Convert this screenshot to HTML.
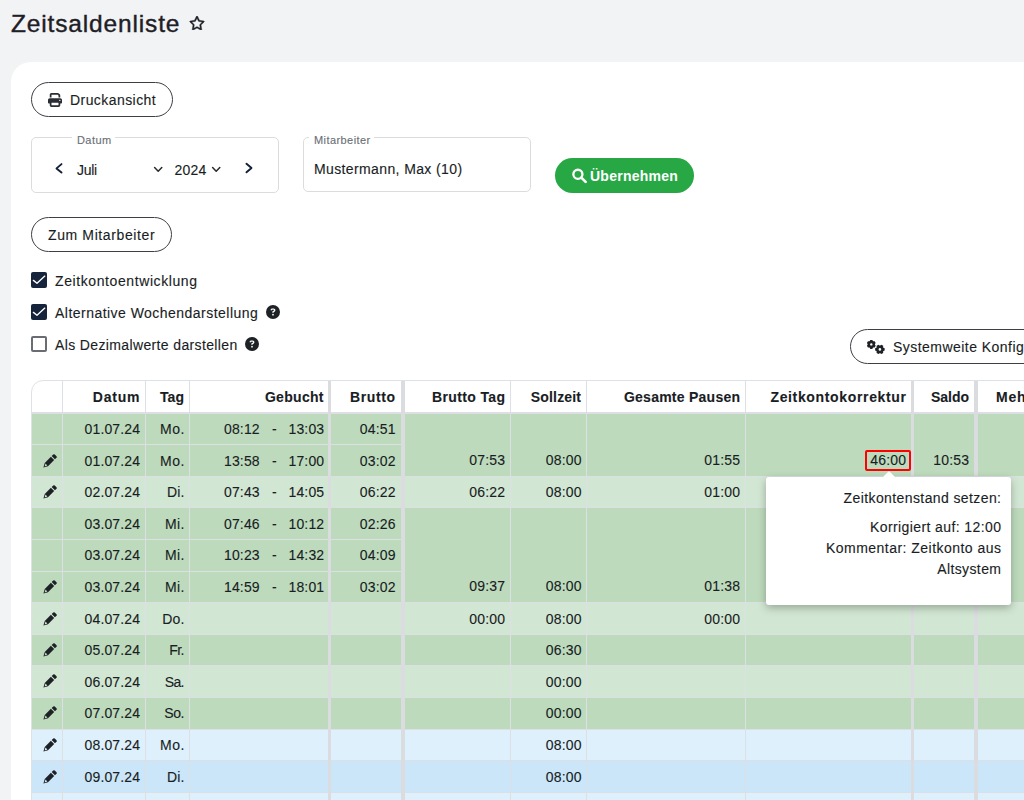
<!DOCTYPE html>
<html><head><meta charset="utf-8">
<style>
*{box-sizing:border-box;margin:0;padding:0}
html,body{width:1024px;height:800px;overflow:hidden}
body{background:#f2f3f5;font-family:"Liberation Sans",sans-serif;color:#191d24;position:relative}
.a{position:absolute}
.t{position:absolute;white-space:nowrap;line-height:1;font-size:14px;-webkit-text-stroke:0.12px currentColor}
.b{-webkit-text-stroke:0.1px currentColor}
.b{font-weight:bold}
.btn{position:absolute;border:1px solid #3c4046;border-radius:18px;background:#fff}
.fs{position:absolute;border:1px solid #dcdcdc;border-radius:5px}
.leg{position:absolute;background:#fff;height:12px;}
.cb{position:absolute;left:31px;width:16px;height:16px;border-radius:2px}
.cb.on{background:#15233b}
.cb.off{border:2px solid #696d73;background:#fff}
.help{position:absolute;width:14px;height:14px}
.hl{position:absolute;height:1px;background:#dcdfe4}
.vl{position:absolute;width:1px;background:#dcdfe4}
.row{position:absolute;left:32px;width:992px}
.pen{position:absolute;left:43px;width:14px;height:14px}
</style></head><body>
<div class="t" style="top:12.0px;left:11px;font-size:24.5px;letter-spacing:0.848px;color:#1d2025;-webkit-text-stroke:0.4px #1d2025;">Zeitsaldenliste</div>
<svg class="a" style="left:189px;top:15.5px" width="16" height="14.2" viewBox="0 0 576 512"><path fill="#1d2025" stroke="#1d2025" stroke-width="14" d="M287.9 0c9.2 0 17.6 5.2 21.6 13.5l68.6 141.3 153.2 22.6c9 1.3 16.5 7.6 19.3 16.3s.5 18.1-5.9 24.5L433.6 328.4l26.2 155.6c1.5 9-2.2 18.1-9.700 23.5s-17.3 6-25.3 1.7l-137-73.2L151 509.1c-8.1 4.3-17.9 3.7-25.3-1.7s-11.2-14.5-9.7-23.5l26.2-155.6L31.1 218.2c-6.5-6.4-8.7-15.9-5.9-24.5s10.3-15 19.3-16.3l153.2-22.6L266.3 13.5C270.4 5.2 278.7 0 287.9 0zm0 79L235.4 187.2c-3.5 7.1-10.2 12.1-18.1 13.3L99 217.9 184.9 303c5.5 5.5 8.1 13.3 6.8 21L171.4 443.7l105.2-56.2c7.1-3.8 15.600-3.8 22.6 0l105.2 56.2L384.2 324.1c-1.3-7.7 1.2-15.5 6.8-21l85.9-85.1L358.6 200.5c-7.8-1.2-14.6-6.1-18.1-13.3L287.9 79z"/></svg>
<div class="a" style="left:11px;top:62px;width:1100px;height:900px;background:#fff;border-radius:20px"></div>
<div class="btn" style="left:31px;top:82px;width:142px;height:35px"></div>
<svg class="a" style="left:48px;top:93px" width="14" height="14" viewBox="0 0 512 512"><path fill="#2a2e34" d="M128 0C92.7 0 64 28.7 64 64v96h64V64H354.5L384 93.5V160h64V93.5c0-17-6.7-33.3-18.7-45.3L400 18.7C388 6.7 371.7 0 354.7 0H128zM384 352v32 64H128V384 368 352H384zm64 32h32c17.7 0 32-14.3 32-32V256c0-35.3-28.7-64-64-64H64c-35.3 0-64 28.7-64 64v96c0 17.7 14.3 32 32 32H64v64c0 35.3 28.7 64 64 64H384c35.3 0 64-28.7 64-64V384zM432 248a24 24 0 1 1 0 48 24 24 0 1 1 0-48z"/></svg>
<div class="t" style="top:93.0px;left:70px;letter-spacing:0.432px;">Druckansicht</div>
<div class="fs" style="left:31px;top:137px;width:248px;height:56px"></div>
<div class="leg" style="left:72px;top:134px;width:43px"></div>
<div class="t" style="top:134.57px;left:77px;font-size:11px;letter-spacing:0.422px;color:#6a6f76;top:135px;">Datum</div>
<div class="t" style="top:163.0px;left:77px;letter-spacing:-0.328px;">Juli</div>
<svg class="a" style="left:50px;top:158px" width="20" height="20" viewBox="0 0 20 20"><path d="M11.5 6.1L6.5 10.4 11.5 14.6" fill="none" stroke="#142038" stroke-width="1.9" stroke-linecap="round" stroke-linejoin="round"/></svg>
<svg class="a" style="left:240px;top:158px" width="20" height="20" viewBox="0 0 20 20"><path d="M6.5 5.7L11.5 10 6.5 14.3" fill="none" stroke="#142038" stroke-width="1.9" stroke-linecap="round" stroke-linejoin="round"/></svg>
<svg class="a" style="left:150px;top:160px" width="80" height="20" viewBox="0 0 80 20"><path d="M4.6 7.6L8.2 11.3 11.8 7.6M62.6 7.6L66.2 11.3 69.8 7.6" fill="none" stroke="#2a2a2a" stroke-width="1.5" stroke-linecap="round" stroke-linejoin="round"/></svg>
<div class="t" style="top:163.0px;left:174.5px;letter-spacing:0.223px;">2024</div>
<div class="fs" style="left:303px;top:137px;width:228px;height:55px"></div>
<div class="leg" style="left:309px;top:134px;width:65px"></div>
<div class="t" style="top:134.57px;left:314px;font-size:11px;letter-spacing:0.421px;color:#6a6f76;top:135px;">Mitarbeiter</div>
<div class="t" style="top:162.0px;left:314px;letter-spacing:0.381px;">Mustermann, Max (10)</div>
<div class="a" style="left:555px;top:158px;width:139px;height:35px;border-radius:18px;background:#28a745"></div>
<svg class="a" style="left:571px;top:168px" width="16" height="16" viewBox="0 0 16 16"><circle cx="6.9" cy="6.3" r="4.55" fill="none" stroke="#fff" stroke-width="2.3"/><path d="M10.3 9.6L14.6 13.9" stroke="#fff" stroke-width="2.6" stroke-linecap="round"/></svg>
<div class="t b" style="top:169.0px;left:590px;letter-spacing:0.253px;color:#fff;-webkit-text-stroke:0;">&Uuml;bernehmen</div>
<div class="btn" style="left:31px;top:217px;width:141px;height:35px"></div>
<div class="t" style="top:228.0px;left:48px;letter-spacing:0.615px;">Zum Mitarbeiter</div>
<div class="cb on" style="top:272px"></div>
<svg class="a" style="left:31px;top:272px" width="16" height="16" viewBox="0 0 16 16"><path d="M2.4 8.4L6 11.3 13.8 4.1" fill="none" stroke="#fff" stroke-width="1.35" stroke-linecap="round" stroke-linejoin="round"/></svg>
<div class="t" style="top:274.0px;left:55px;letter-spacing:0.595px;">Zeitkontoentwicklung</div>
<div class="cb on" style="top:304px"></div>
<svg class="a" style="left:31px;top:304px" width="16" height="16" viewBox="0 0 16 16"><path d="M2.4 8.4L6 11.3 13.8 4.1" fill="none" stroke="#fff" stroke-width="1.35" stroke-linecap="round" stroke-linejoin="round"/></svg>
<div class="t" style="top:306.0px;left:55px;letter-spacing:0.47px;">Alternative Wochendarstellung</div>
<div class="cb off" style="top:336px"></div>
<div class="t" style="top:338.0px;left:55px;letter-spacing:0.365px;">Als Dezimalwerte darstellen</div>
<svg class="a" style="left:266px;top:305px" width="14" height="14" viewBox="0 0 512 512"><path fill="#1e2126" d="M256 512A256 256 0 1 0 256 0a256 256 0 1 0 0 512zM169.8 165.3c7.9-22.3 29.1-37.3 52.8-37.3h58.3c34.9 0 63.1 28.3 63.1 63.1c0 22.6-12.1 43.5-31.7 54.8L280 264.4c-.2 13-10.9 23.6-24 23.6c-13.3 0-24-10.7-24-24V250.5c0-8.6 4.6-16.5 12.1-20.8l44.3-25.4c4.7-2.7 7.6-7.7 7.6-13.1c0-8.4-6.8-15.1-15.1-15.1H222.6c-3.4 0-6.4 2.1-7.5 5.3l-.4 1.2c-4.4 12.5-18.2 19-30.6 14.6s-19-18.2-14.6-30.6l.4-1.2zM224 352a32 32 0 1 1 64 0 32 32 0 1 1 -64 0z"/></svg>
<svg class="a" style="left:245px;top:337px" width="14" height="14" viewBox="0 0 512 512"><path fill="#1e2126" d="M256 512A256 256 0 1 0 256 0a256 256 0 1 0 0 512zM169.8 165.3c7.9-22.3 29.1-37.3 52.8-37.3h58.3c34.9 0 63.1 28.3 63.1 63.1c0 22.6-12.1 43.5-31.7 54.8L280 264.4c-.2 13-10.9 23.6-24 23.6c-13.3 0-24-10.7-24-24V250.5c0-8.6 4.6-16.5 12.1-20.8l44.3-25.4c4.7-2.7 7.6-7.7 7.6-13.1c0-8.4-6.8-15.1-15.1-15.1H222.6c-3.4 0-6.4 2.1-7.5 5.3l-.4 1.2c-4.4 12.5-18.2 19-30.6 14.6s-19-18.2-14.6-30.6l.4-1.2zM224 352a32 32 0 1 1 64 0 32 32 0 1 1 -64 0z"/></svg>
<div class="btn" style="left:850px;top:329px;width:300px;height:35px"></div>
<div class="t" style="top:340.0px;left:893px;letter-spacing:0.461px;">Systemweite Konfiguration</div>
<svg class="a" style="left:862px;top:334px" width="30" height="26" viewBox="862 334 30 26"><path fill-rule="evenodd" fill="#1e2126" d="M874.99 344.72L875.70 345.74L874.66 347.54L873.42 347.43L872.86 347.75L872.33 348.88L870.27 348.88L869.74 347.75L869.18 347.43L867.94 347.54L866.90 345.74L867.61 344.72L867.61 344.08L866.90 343.06L867.94 341.26L869.18 341.37L869.74 341.05L870.27 339.92L872.33 339.92L872.86 341.05L873.42 341.37L874.66 341.26L875.70 343.06L874.99 344.08ZM870.10 344.40a1.20 1.20 0 1 0 2.40 0a1.20 1.20 0 1 0 -2.40 0ZM883.43 347.75L884.67 348.30L884.67 350.50L883.43 351.05L883.09 351.64L883.24 352.98L881.33 354.09L880.24 353.29L879.56 353.29L878.47 354.09L876.56 352.98L876.71 351.64L876.37 351.05L875.13 350.50L875.13 348.30L876.37 347.75L876.71 347.16L876.56 345.82L878.47 344.71L879.56 345.51L880.24 345.51L881.33 344.71L883.24 345.82L883.09 347.16ZM878.60 349.40a1.30 1.30 0 1 0 2.60 0a1.30 1.30 0 1 0 -2.60 0Z"/></svg>
<div class="a" style="left:31px;top:380px;width:1100px;height:500px;border:1px solid #dee2e6;border-radius:12px 0 0 0;background:#fff"></div>
<div class="row" style="top:414px;height:31px;background:#bddbbc"></div>
<div class="row" style="top:445px;height:32px;background:#bddbbc"></div>
<div class="row" style="top:477px;height:31px;background:#d2e7d3"></div>
<div class="row" style="top:508px;height:32px;background:#bddbbc"></div>
<div class="row" style="top:540px;height:32px;background:#bddbbc"></div>
<div class="row" style="top:572px;height:31px;background:#bddbbc"></div>
<div class="row" style="top:603px;height:32px;background:#d2e7d3"></div>
<div class="row" style="top:635px;height:31px;background:#bddbbc"></div>
<div class="row" style="top:666px;height:32px;background:#d2e7d3"></div>
<div class="row" style="top:698px;height:32px;background:#bddbbc"></div>
<div class="row" style="top:730px;height:31px;background:#ddf0fb"></div>
<div class="row" style="top:761px;height:32px;background:#cae6f8"></div>
<div class="row" style="top:793px;height:32px;background:#ddf0fb"></div>
<div class="hl" style="left:32px;top:412px;width:992px;height:2px;background:#dddfe5"></div>
<div class="hl" style="left:32px;top:444px;width:373px"></div>
<div class="hl" style="left:32px;top:476px;width:992px"></div>
<div class="hl" style="left:32px;top:507px;width:992px"></div>
<div class="hl" style="left:32px;top:539px;width:373px"></div>
<div class="hl" style="left:32px;top:571px;width:373px"></div>
<div class="hl" style="left:32px;top:602px;width:992px"></div>
<div class="hl" style="left:32px;top:634px;width:992px"></div>
<div class="hl" style="left:32px;top:665px;width:992px"></div>
<div class="hl" style="left:32px;top:697px;width:992px"></div>
<div class="hl" style="left:32px;top:729px;width:992px"></div>
<div class="hl" style="left:32px;top:760px;width:992px"></div>
<div class="hl" style="left:32px;top:792px;width:992px"></div>
<div class="vl" style="left:62px;top:381px;height:419px"></div>
<div class="vl" style="left:145px;top:381px;height:419px"></div>
<div class="vl" style="left:189px;top:381px;height:419px"></div>
<div class="vl" style="left:510px;top:381px;height:419px"></div>
<div class="vl" style="left:586px;top:381px;height:419px"></div>
<div class="vl" style="left:745px;top:381px;height:419px"></div>
<div class="vl" style="left:328px;top:381px;height:419px;width:3px;background:#dbdcdf"></div>
<div class="vl" style="left:401px;top:381px;height:419px;width:4px;background:#dbdcdf"></div>
<div class="vl" style="left:911px;top:381px;height:419px;width:3px;background:#dbdcdf"></div>
<div class="vl" style="left:974px;top:381px;height:419px;width:4px;background:#dbdcdf"></div>
<div class="t b" style="top:390.0px;right:883.72px;letter-spacing:0.781px;">Datum</div>
<div class="t b" style="top:390.0px;right:839.89px;letter-spacing:0.115px;">Tag</div>
<div class="t b" style="top:390.0px;right:700.21px;letter-spacing:0.295px;">Gebucht</div>
<div class="t b" style="top:390.0px;right:628.4px;letter-spacing:0.596px;">Brutto</div>
<div class="t b" style="top:390.0px;right:518.63px;letter-spacing:0.367px;">Brutto Tag</div>
<div class="t b" style="top:390.0px;right:442.83px;letter-spacing:0.166px;">Sollzeit</div>
<div class="t b" style="top:390.0px;right:283.75px;letter-spacing:0.248px;">Gesamte Pausen</div>
<div class="t b" style="top:390.0px;right:117.35px;letter-spacing:0.654px;">Zeitkontokorrektur</div>
<div class="t b" style="top:390.0px;right:55.05px;letter-spacing:-0.05px;">Saldo</div>
<div class="t b" style="top:390.0px;left:996px;letter-spacing:0.717px;">Mehrarbeit</div>
<div class="t" style="top:422.0px;right:883.87px;letter-spacing:0.133px;">01.07.24</div>
<div class="t" style="top:422.0px;right:838.97px;letter-spacing:0.526px;">Mo.</div>
<div class="t" style="top:422.0px;left:224px;letter-spacing:0.15px;">08:12</div>
<div class="t" style="top:422.0px;left:272px;letter-spacing:-0.156px;">-</div>
<div class="t" style="top:422.0px;left:288.5px;letter-spacing:0.15px;">13:03</div>
<div class="t" style="top:422.0px;right:628.35px;letter-spacing:0.15px;">04:51</div>
<svg class="pen" style="top:454px" viewBox="0 0 14 14" fill="#1e2126"><path fill-rule="evenodd" transform="translate(0.4 13.6) rotate(-45)" d="M0 0L4.2 -2.3H12.9V2.3H4.2ZM1.7 0L4.3 1.35V-1.35ZM14 -2.3H16.2A1.1 1.1 0 0 1 17.3 -1.2V1.2A1.1 1.1 0 0 1 16.2 2.3H14Z"/></svg>
<div class="t" style="top:453.6px;right:883.87px;letter-spacing:0.133px;">01.07.24</div>
<div class="t" style="top:453.6px;right:838.97px;letter-spacing:0.526px;">Mo.</div>
<div class="t" style="top:453.6px;left:224px;letter-spacing:0.15px;">13:58</div>
<div class="t" style="top:453.6px;left:272px;letter-spacing:-0.156px;">-</div>
<div class="t" style="top:453.6px;left:288.5px;letter-spacing:0.15px;">17:00</div>
<div class="t" style="top:453.6px;right:628.35px;letter-spacing:0.15px;">03:02</div>
<div class="t" style="top:452.6px;right:518.85px;letter-spacing:0.15px;">07:53</div>
<div class="t" style="top:452.6px;right:442.35px;letter-spacing:0.15px;">08:00</div>
<div class="t" style="top:452.6px;right:283.85px;letter-spacing:0.15px;">01:55</div>
<svg class="pen" style="top:485px" viewBox="0 0 14 14" fill="#1e2126"><path fill-rule="evenodd" transform="translate(0.4 13.6) rotate(-45)" d="M0 0L4.2 -2.3H12.9V2.3H4.2ZM1.7 0L4.3 1.35V-1.35ZM14 -2.3H16.2A1.1 1.1 0 0 1 17.3 -1.2V1.2A1.1 1.1 0 0 1 16.2 2.3H14Z"/></svg>
<div class="t" style="top:485.2px;right:883.87px;letter-spacing:0.133px;">02.07.24</div>
<div class="t" style="top:485.2px;right:839.34px;letter-spacing:0.156px;">Di.</div>
<div class="t" style="top:485.2px;left:224px;letter-spacing:0.15px;">07:43</div>
<div class="t" style="top:485.2px;left:272px;letter-spacing:-0.156px;">-</div>
<div class="t" style="top:485.2px;left:288.5px;letter-spacing:0.15px;">14:05</div>
<div class="t" style="top:485.2px;right:628.35px;letter-spacing:0.15px;">06:22</div>
<div class="t" style="top:485.2px;right:518.85px;letter-spacing:0.15px;">06:22</div>
<div class="t" style="top:485.2px;right:442.35px;letter-spacing:0.15px;">08:00</div>
<div class="t" style="top:485.2px;right:283.85px;letter-spacing:0.15px;">01:00</div>
<div class="t" style="top:516.8px;right:883.87px;letter-spacing:0.133px;">03.07.24</div>
<div class="t" style="top:516.8px;right:839.04px;letter-spacing:0.464px;">Mi.</div>
<div class="t" style="top:516.8px;left:224px;letter-spacing:0.15px;">07:46</div>
<div class="t" style="top:516.8px;left:272px;letter-spacing:-0.156px;">-</div>
<div class="t" style="top:516.8px;left:288.5px;letter-spacing:0.15px;">10:12</div>
<div class="t" style="top:516.8px;right:628.35px;letter-spacing:0.15px;">02:26</div>
<div class="t" style="top:548.4px;right:883.87px;letter-spacing:0.133px;">03.07.24</div>
<div class="t" style="top:548.4px;right:839.04px;letter-spacing:0.464px;">Mi.</div>
<div class="t" style="top:548.4px;left:224px;letter-spacing:0.15px;">10:23</div>
<div class="t" style="top:548.4px;left:272px;letter-spacing:-0.156px;">-</div>
<div class="t" style="top:548.4px;left:288.5px;letter-spacing:0.15px;">14:32</div>
<div class="t" style="top:548.4px;right:628.35px;letter-spacing:0.15px;">04:09</div>
<svg class="pen" style="top:580px" viewBox="0 0 14 14" fill="#1e2126"><path fill-rule="evenodd" transform="translate(0.4 13.6) rotate(-45)" d="M0 0L4.2 -2.3H12.9V2.3H4.2ZM1.7 0L4.3 1.35V-1.35ZM14 -2.3H16.2A1.1 1.1 0 0 1 17.3 -1.2V1.2A1.1 1.1 0 0 1 16.2 2.3H14Z"/></svg>
<div class="t" style="top:580.0px;right:883.87px;letter-spacing:0.133px;">03.07.24</div>
<div class="t" style="top:580.0px;right:839.04px;letter-spacing:0.464px;">Mi.</div>
<div class="t" style="top:580.0px;left:224px;letter-spacing:0.15px;">14:59</div>
<div class="t" style="top:580.0px;left:272px;letter-spacing:-0.156px;">-</div>
<div class="t" style="top:580.0px;left:288.5px;letter-spacing:0.15px;">18:01</div>
<div class="t" style="top:580.0px;right:628.35px;letter-spacing:0.15px;">03:02</div>
<div class="t" style="top:579.0px;right:518.85px;letter-spacing:0.15px;">09:37</div>
<div class="t" style="top:579.0px;right:442.35px;letter-spacing:0.15px;">08:00</div>
<div class="t" style="top:579.0px;right:283.85px;letter-spacing:0.15px;">01:38</div>
<svg class="pen" style="top:612px" viewBox="0 0 14 14" fill="#1e2126"><path fill-rule="evenodd" transform="translate(0.4 13.6) rotate(-45)" d="M0 0L4.2 -2.3H12.9V2.3H4.2ZM1.7 0L4.3 1.35V-1.35ZM14 -2.3H16.2A1.1 1.1 0 0 1 17.3 -1.2V1.2A1.1 1.1 0 0 1 16.2 2.3H14Z"/></svg>
<div class="t" style="top:611.6px;right:883.87px;letter-spacing:0.133px;">04.07.24</div>
<div class="t" style="top:611.6px;right:839.28px;letter-spacing:0.219px;">Do.</div>
<div class="t" style="top:611.6px;right:518.85px;letter-spacing:0.15px;">00:00</div>
<div class="t" style="top:611.6px;right:442.35px;letter-spacing:0.15px;">08:00</div>
<div class="t" style="top:611.6px;right:283.85px;letter-spacing:0.15px;">00:00</div>
<svg class="pen" style="top:643px" viewBox="0 0 14 14" fill="#1e2126"><path fill-rule="evenodd" transform="translate(0.4 13.6) rotate(-45)" d="M0 0L4.2 -2.3H12.9V2.3H4.2ZM1.7 0L4.3 1.35V-1.35ZM14 -2.3H16.2A1.1 1.1 0 0 1 17.3 -1.2V1.2A1.1 1.1 0 0 1 16.2 2.3H14Z"/></svg>
<div class="t" style="top:643.2px;right:883.87px;letter-spacing:0.133px;">05.07.24</div>
<div class="t" style="top:643.2px;right:840.09px;letter-spacing:-0.594px;">Fr.</div>
<div class="t" style="top:643.2px;right:442.35px;letter-spacing:0.15px;">06:30</div>
<svg class="pen" style="top:674px" viewBox="0 0 14 14" fill="#1e2126"><path fill-rule="evenodd" transform="translate(0.4 13.6) rotate(-45)" d="M0 0L4.2 -2.3H12.9V2.3H4.2ZM1.7 0L4.3 1.35V-1.35ZM14 -2.3H16.2A1.1 1.1 0 0 1 17.3 -1.2V1.2A1.1 1.1 0 0 1 16.2 2.3H14Z"/></svg>
<div class="t" style="top:674.8px;right:883.87px;letter-spacing:0.133px;">06.07.24</div>
<div class="t" style="top:674.8px;right:840.07px;letter-spacing:-0.573px;">Sa.</div>
<div class="t" style="top:674.8px;right:442.35px;letter-spacing:0.15px;">00:00</div>
<svg class="pen" style="top:706px" viewBox="0 0 14 14" fill="#1e2126"><path fill-rule="evenodd" transform="translate(0.4 13.6) rotate(-45)" d="M0 0L4.2 -2.3H12.9V2.3H4.2ZM1.7 0L4.3 1.35V-1.35ZM14 -2.3H16.2A1.1 1.1 0 0 1 17.3 -1.2V1.2A1.1 1.1 0 0 1 16.2 2.3H14Z"/></svg>
<div class="t" style="top:706.4px;right:883.87px;letter-spacing:0.133px;">07.07.24</div>
<div class="t" style="top:706.4px;right:839.86px;letter-spacing:-0.365px;">So.</div>
<div class="t" style="top:706.4px;right:442.35px;letter-spacing:0.15px;">00:00</div>
<svg class="pen" style="top:738px" viewBox="0 0 14 14" fill="#1e2126"><path fill-rule="evenodd" transform="translate(0.4 13.6) rotate(-45)" d="M0 0L4.2 -2.3H12.9V2.3H4.2ZM1.7 0L4.3 1.35V-1.35ZM14 -2.3H16.2A1.1 1.1 0 0 1 17.3 -1.2V1.2A1.1 1.1 0 0 1 16.2 2.3H14Z"/></svg>
<div class="t" style="top:738.0px;right:883.87px;letter-spacing:0.133px;">08.07.24</div>
<div class="t" style="top:738.0px;right:838.97px;letter-spacing:0.526px;">Mo.</div>
<div class="t" style="top:738.0px;right:442.35px;letter-spacing:0.15px;">08:00</div>
<svg class="pen" style="top:770px" viewBox="0 0 14 14" fill="#1e2126"><path fill-rule="evenodd" transform="translate(0.4 13.6) rotate(-45)" d="M0 0L4.2 -2.3H12.9V2.3H4.2ZM1.7 0L4.3 1.35V-1.35ZM14 -2.3H16.2A1.1 1.1 0 0 1 17.3 -1.2V1.2A1.1 1.1 0 0 1 16.2 2.3H14Z"/></svg>
<div class="t" style="top:769.6px;right:883.87px;letter-spacing:0.133px;">09.07.24</div>
<div class="t" style="top:769.6px;right:839.34px;letter-spacing:0.156px;">Di.</div>
<div class="t" style="top:769.6px;right:442.35px;letter-spacing:0.15px;">08:00</div>
<svg class="pen" style="top:802px" viewBox="0 0 14 14" fill="#1e2126"><path fill-rule="evenodd" transform="translate(0.4 13.6) rotate(-45)" d="M0 0L4.2 -2.3H12.9V2.3H4.2ZM1.7 0L4.3 1.35V-1.35ZM14 -2.3H16.2A1.1 1.1 0 0 1 17.3 -1.2V1.2A1.1 1.1 0 0 1 16.2 2.3H14Z"/></svg>
<div class="t" style="top:801.2px;right:883.87px;letter-spacing:0.133px;">10.07.24</div>
<div class="t" style="top:801.2px;right:839.04px;letter-spacing:0.464px;">Mi.</div>
<div class="t" style="top:801.2px;right:442.35px;letter-spacing:0.15px;">08:00</div>
<div class="a" style="left:865px;top:450px;width:46px;height:21px;border:2px solid #ff0000;border-radius:2px"></div>
<div class="t" style="top:452.6px;right:117.85px;letter-spacing:0.15px;">46:00</div>
<div class="t" style="top:452.6px;right:54.85px;letter-spacing:0.15px;">10:53</div>
<div class="a" style="left:766px;top:477px;width:245px;height:128px;background:#fff;border-radius:3px;box-shadow:0 3px 8px rgba(0,0,0,.28)"></div>
<svg class="a" style="left:882px;top:471px" width="14" height="7" viewBox="0 0 14 7"><path d="M0 7L7 0 14 7z" fill="#fff"/></svg>
<div class="t" style="top:491.0px;right:22.6px;letter-spacing:0.399px;">Zeitkontenstand setzen:</div>
<div class="t" style="top:520.0px;right:22.6px;letter-spacing:0.402px;">Korrigiert auf: 12:00</div>
<div class="t" style="top:541.0px;right:22.53px;letter-spacing:0.471px;">Kommentar: Zeitkonto aus</div>
<div class="t" style="top:561.5px;right:22.61px;letter-spacing:0.392px;">Altsystem</div>
</body></html>
